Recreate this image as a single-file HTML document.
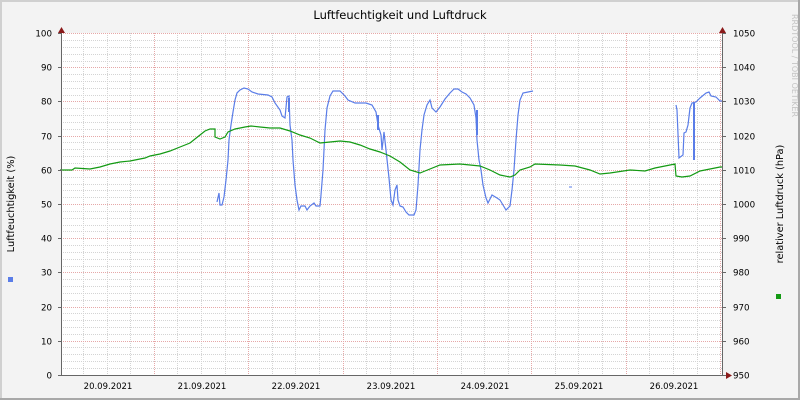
<!DOCTYPE html>
<html><head><meta charset="utf-8"><style>
html,body{margin:0;padding:0;background:#f3f3f3}
svg{display:block}
text{font-family:"DejaVu Sans","Liberation Sans",sans-serif;fill:#000}
</style></head><body>
<svg width="800" height="400" viewBox="0 0 800 400" xmlns="http://www.w3.org/2000/svg">
<rect x="0" y="0" width="800" height="400" fill="#f3f3f3"/>
<path d="M0 1H799M1 0V399" stroke="#d0d0d0" stroke-width="2"/>
<path d="M0 399H800M799 0V400" stroke="#a8a8a8" stroke-width="2"/>
<rect x="61" y="33" width="661" height="342" fill="#fff"/>
<g id="minor" stroke="#d4d4d4" stroke-width="1" stroke-dasharray="1,1" shape-rendering="crispEdges">
<path d="M61 40.5H722M61 47.5H722M61 54.5H722M61 61.5H722M61 74.5H722M61 81.5H722M61 88.5H722M61 95.5H722M61 108.5H722M61 115.5H722M61 122.5H722M61 129.5H722M61 142.5H722M61 149.5H722M61 156.5H722M61 163.5H722M61 177.5H722M61 184.5H722M61 190.5H722M61 197.5H722M61 211.5H722M61 218.5H722M61 225.5H722M61 231.5H722M61 245.5H722M61 252.5H722M61 259.5H722M61 266.5H722M61 279.5H722M61 286.5H722M61 293.5H722M61 300.5H722M61 313.5H722M61 320.5H722M61 327.5H722M61 334.5H722M61 347.5H722M61 354.5H722M61 361.5H722M61 368.5H722"/>
<path d="M83.5 33V375M107.5 33V375M130.5 33V375M177.5 33V375M201.5 33V375M225.5 33V375M272.5 33V375M295.5 33V375M319.5 33V375M366.5 33V375M390.5 33V375M413.5 33V375M461.5 33V375M484.5 33V375M508.5 33V375M555.5 33V375M578.5 33V375M602.5 33V375M649.5 33V375M673.5 33V375M697.5 33V375"/>
</g>
<g stroke="#e6a8a8" stroke-width="1" stroke-dasharray="1,1" shape-rendering="crispEdges">
<path d="M61 33.5H722M61 67.5H722M61 101.5H722M61 136.5H722M61 170.5H722M61 204.5H722M61 238.5H722M61 272.5H722M61 307.5H722M61 341.5H722"/>
<path d="M154.5 33V375M248.5 33V375M343.5 33V375M437.5 33V375M531.5 33V375M626.5 33V375M720.5 33V375"/>
</g>
<g fill="none" stroke-width="1.2" stroke-linejoin="miter">
<polyline stroke="#5a7de8" points="217,202 219,193 220,205 222,205 224,197 226,180 228,160 229,140 231,125 233,112 235,100 237,93 240,90 244,88 248,89 252,92 258,94 268,95 272,97 275,103 280,110 282,116 285,118 287,97 289,96 290,125 292,140 293,160 295,185 297,200 299,210 301,206 305,206 307,210 310,206 314,203 316,206 320,206 321,195 323,170 325,130 327,108 330,96 333,91 340,91 345,96 348,100 355,103 360,103 366,103 372,105 376,112 378,125 381,135 382,150 384,132 386,150 389,178 391,200 393,205 395,190 397,185 398,200 400,206 403,207 406,212 409,215 414,215 416,210 418,185 420,150 422,130 424,115 427,105 430,100 432,108 436,112 440,107 445,99 450,93 454,89 458,89 462,92 466,94 470,98 474,105 476,118 477,140 479,160 481,170 483,185 486,198 488,203 492,195 497,198 500,200 503,205 506,210 510,206 512,190 514,170 516,140 518,115 520,100 523,93 533,91"/>
<polyline stroke="#5a7de8" points="676,105 677,110 679,158 683,155 684,133 686,132 688,125 690,108 692,103 696,102 697,101 700,98 706,93 709,92 711,96 716,97 720,101 722,101"/>
<path d="M694 103V160M378 115V130M477 110V135M289 98V112" stroke="#5a7de8" stroke-width="2"/>
<polyline stroke="#139a13" points="60,170 72,170 75,168 90,169 100,167 110,164 120,162 130,161 145,158 150,156 160,154 170,151 180,147 190,143 200,135 205,131 210,129 215,129 215,137 220,139 225,137 228,132 235,129 245,127 251,126 260,127 270,128 280,128 290,131 300,135 310,138 320,143 330,142 340,141 350,142 360,145 370,149 380,152 390,156 400,162 410,170 420,173 425,171 440,165 460,164 480,166 490,170 500,175 510,177 515,175 520,170 530,167 535,164 560,165 575,166 590,170 600,174 610,173 630,170 645,171 655,168 670,165 675,164 676,176 682,177 690,176 700,171 710,169 720,167 722,167"/>
</g>
<path d="M569 187H572" stroke="#5a7de8"/>
<g stroke="#666" stroke-width="1" shape-rendering="crispEdges">
<path d="M61.5 30V376M722.5 30V376M58 375.5H726"/>
<path d="M58 33.5H61M58 67.5H61M58 101.5H61M58 136.5H61M58 170.5H61M58 204.5H61M58 238.5H61M58 272.5H61M58 307.5H61M58 341.5H61M722 33.5H726M722 67.5H726M722 101.5H726M722 136.5H726M722 170.5H726M722 204.5H726M722 238.5H726M722 272.5H726M722 307.5H726M722 341.5H726"/>
</g>
<g fill="#8b1a1a"><path d="M58 33L61.5 27L65 33Z"/><path d="M719 33L722.5 27L726 33Z"/><path d="M726 372L732 375.5L726 379Z"/></g>
<text x="400" y="19" font-size="11.5" text-anchor="middle">Luftfeuchtigkeit und Luftdruck</text>
<g font-size="8.7" text-anchor="end">
<text x="52" y="36.5">100</text><text x="52" y="70.5">90</text><text x="52" y="104.5">80</text><text x="52" y="139.5">70</text><text x="52" y="173.5">60</text><text x="52" y="207.5">50</text><text x="52" y="241.5">40</text><text x="52" y="275.5">30</text><text x="52" y="310.5">20</text><text x="52" y="344.5">10</text><text x="52" y="378.5">0</text>
</g>
<g font-size="8.7">
<text x="733" y="36.5">1050</text><text x="733" y="70.5">1040</text><text x="733" y="104.5">1030</text><text x="733" y="139.5">1020</text><text x="733" y="173.5">1010</text><text x="733" y="207.5">1000</text><text x="733" y="241.5">990</text><text x="733" y="275.5">980</text><text x="733" y="310.5">970</text><text x="733" y="344.5">960</text><text x="733" y="378.5">950</text>
</g>
<g font-size="8.5" text-anchor="middle">
<text x="108" y="389">20.09.2021</text><text x="202" y="389">21.09.2021</text><text x="296" y="389">22.09.2021</text><text x="391" y="389">23.09.2021</text><text x="485" y="389">24.09.2021</text><text x="579" y="389">25.09.2021</text><text x="674" y="389">26.09.2021</text>
</g>
<text transform="translate(14,204) rotate(-90)" font-size="9.8" text-anchor="middle">Luftfeuchtigkeit (%)</text>
<text transform="translate(783,204) rotate(-90)" font-size="9.8" text-anchor="middle">relativer Luftdruck (hPa)</text>
<text transform="translate(792,14) rotate(90)" font-size="8" style="fill:#c4c4c4">RRDTOOL / TOBI OETIKER</text>
<rect x="8" y="277" width="5" height="5" fill="#5a7de8"/>
<rect x="776" y="294" width="5" height="5" fill="#139a13"/>
</svg>
</body></html>
